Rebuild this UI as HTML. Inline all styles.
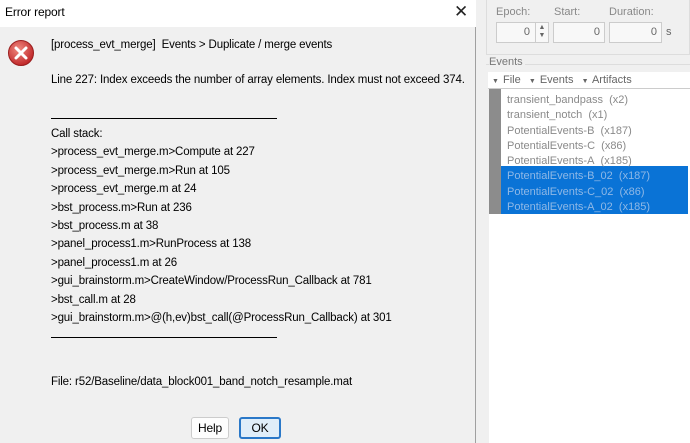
<!DOCTYPE html>
<html><head><style>
*{margin:0;padding:0;box-sizing:border-box}
body{width:690px;height:443px;overflow:hidden;background:#f0f0f0;font-family:"Liberation Sans",sans-serif;position:relative}
.a{position:absolute;white-space:nowrap}
.d{font-size:11.5px;letter-spacing:-0.15px;color:#000}
.r{font-size:11px;color:#888}
</style></head><body>
<div class="a" style="left:0;top:0;width:476px;height:443px;background:#f0f0f0;border-right:1px solid #a0a0a0"></div>
<div class="a" style="left:0;top:0;width:476px;height:27px;background:#fff"></div>
<div class="a d" style="left:5px;top:5px;font-size:12px">Error report</div>
<div class="a" style="left:454px;top:2px;font-size:17px;color:#222">✕</div>
<svg class="a" style="left:7px;top:39px" width="28" height="28" viewBox="0 0 28 28">
<defs><radialGradient id="g" cx="40%" cy="35%" r="65%"><stop offset="0" stop-color="#f08a80"/><stop offset="1" stop-color="#c0282a"/></radialGradient></defs>
<circle cx="14" cy="14" r="12.5" fill="url(#g)" stroke="#9a1e1e"/>
<path d="M9 9L19 19M19 9L9 19" stroke="#fff" stroke-width="3" stroke-linecap="round"/></svg>
<div class="a d" style="left:51px;top:39px">[process_evt_merge]&nbsp; Events &gt; Duplicate / merge events</div>
<div class="a d" style="left:51px;top:74px">Line 227: Index exceeds the number of array elements. Index must not exceed 374.</div>
<div class="a" style="left:51px;top:118px;width:226px;height:1px;background:#000"></div>
<div class="a d" style="left:51px;top:125px;line-height:18.4px">Call stack:<br>&gt;process_evt_merge.m&gt;Compute at 227<br>&gt;process_evt_merge.m&gt;Run at 105<br>&gt;process_evt_merge.m at 24<br>&gt;bst_process.m&gt;Run at 236<br>&gt;bst_process.m at 38<br>&gt;panel_process1.m&gt;RunProcess at 138<br>&gt;panel_process1.m at 26<br>&gt;gui_brainstorm.m&gt;CreateWindow/ProcessRun_Callback at 781<br>&gt;bst_call.m at 28<br>&gt;gui_brainstorm.m&gt;@(h,ev)bst_call(@ProcessRun_Callback) at 301</div>
<div class="a" style="left:51px;top:337px;width:226px;height:1px;background:#000"></div>
<div class="a d" style="left:51px;top:376px">File: r52/Baseline/data_block001_band_notch_resample.mat</div>
<div class="a d" style="left:191px;top:417px;width:38px;height:22px;background:#fdfdfd;border:1px solid #ccc;border-radius:3px;text-align:center;line-height:20px;font-size:12px">Help</div>
<div class="a d" style="left:239px;top:417px;width:42px;height:22px;background:#e0eef9;border:2px solid #2a78c8;border-radius:3px;text-align:center;line-height:18px;font-size:12px">OK</div>
<div class="a" style="left:486px;top:0;width:204px;height:55px;border:1px solid #ddd;border-top:none"></div>
<div class="a r" style="left:496px;top:6px">Epoch:</div>
<div class="a r" style="left:554px;top:6px">Start:</div>
<div class="a r" style="left:609px;top:6px">Duration:</div>
<div class="a r" style="left:496px;top:22px;width:53px;height:21px;border:1px solid #ccc;background:#f8f8f8;text-align:right;padding:3px 18px 0 0;color:#666">0</div>
<div class="a" style="left:535px;top:23px;width:13px;height:19px;border-left:1px solid #ccc;font-size:7px;color:#666;text-align:center;line-height:8px;padding-top:1px">▲<br>▼</div>
<div class="a r" style="left:553px;top:22px;width:52px;height:21px;border:1px solid #ccc;background:#f8f8f8;text-align:right;padding:3px 4px 0 0;color:#666">0</div>
<div class="a r" style="left:609px;top:22px;width:53px;height:21px;border:1px solid #ccc;background:#f8f8f8;text-align:right;padding:3px 4px 0 0;color:#666">0</div>
<div class="a r" style="left:666px;top:26px;color:#666">s</div>
<div class="a" style="left:486px;top:64px;width:204px;height:1px;background:#ddd"></div>
<div class="a r" style="left:489px;top:56px;color:#777;background:#f0f0f0;padding-right:2px">Events</div>
<div class="a r" style="left:488px;top:72px;width:202px;height:17px;background:#fff;border-bottom:1px solid #ccc;color:#666;padding:2px 0 0 4px;word-spacing:1px"><span style="font-size:7px">▼</span> File &nbsp;<span style="font-size:7px">▼</span> Events &nbsp;<span style="font-size:7px">▼</span> Artifacts</div>
<div class="a" style="left:489px;top:89px;width:201px;height:354px;background:#fff"></div>
<div class="a" style="left:489px;top:89px;width:12px;height:125px;background:#8c8c8c"></div>
<div class="a" style="left:501px;top:166px;width:187px;height:48px;background:#0a73d6"></div>
<div class="a r" style="left:507px;top:93px;line-height:15.3px;color:#8a8a8a">transient_bandpass&nbsp; (x2)<br>transient_notch&nbsp; (x1)<br>PotentialEvents-B&nbsp; (x187)<br>PotentialEvents-C&nbsp; (x86)<br>PotentialEvents-A&nbsp; (x185)<br><span style="color:#8fb8e6">PotentialEvents-B_02&nbsp; (x187)<br>PotentialEvents-C_02&nbsp; (x86)<br>PotentialEvents-A_02&nbsp; (x185)</span></div>
</body></html>
